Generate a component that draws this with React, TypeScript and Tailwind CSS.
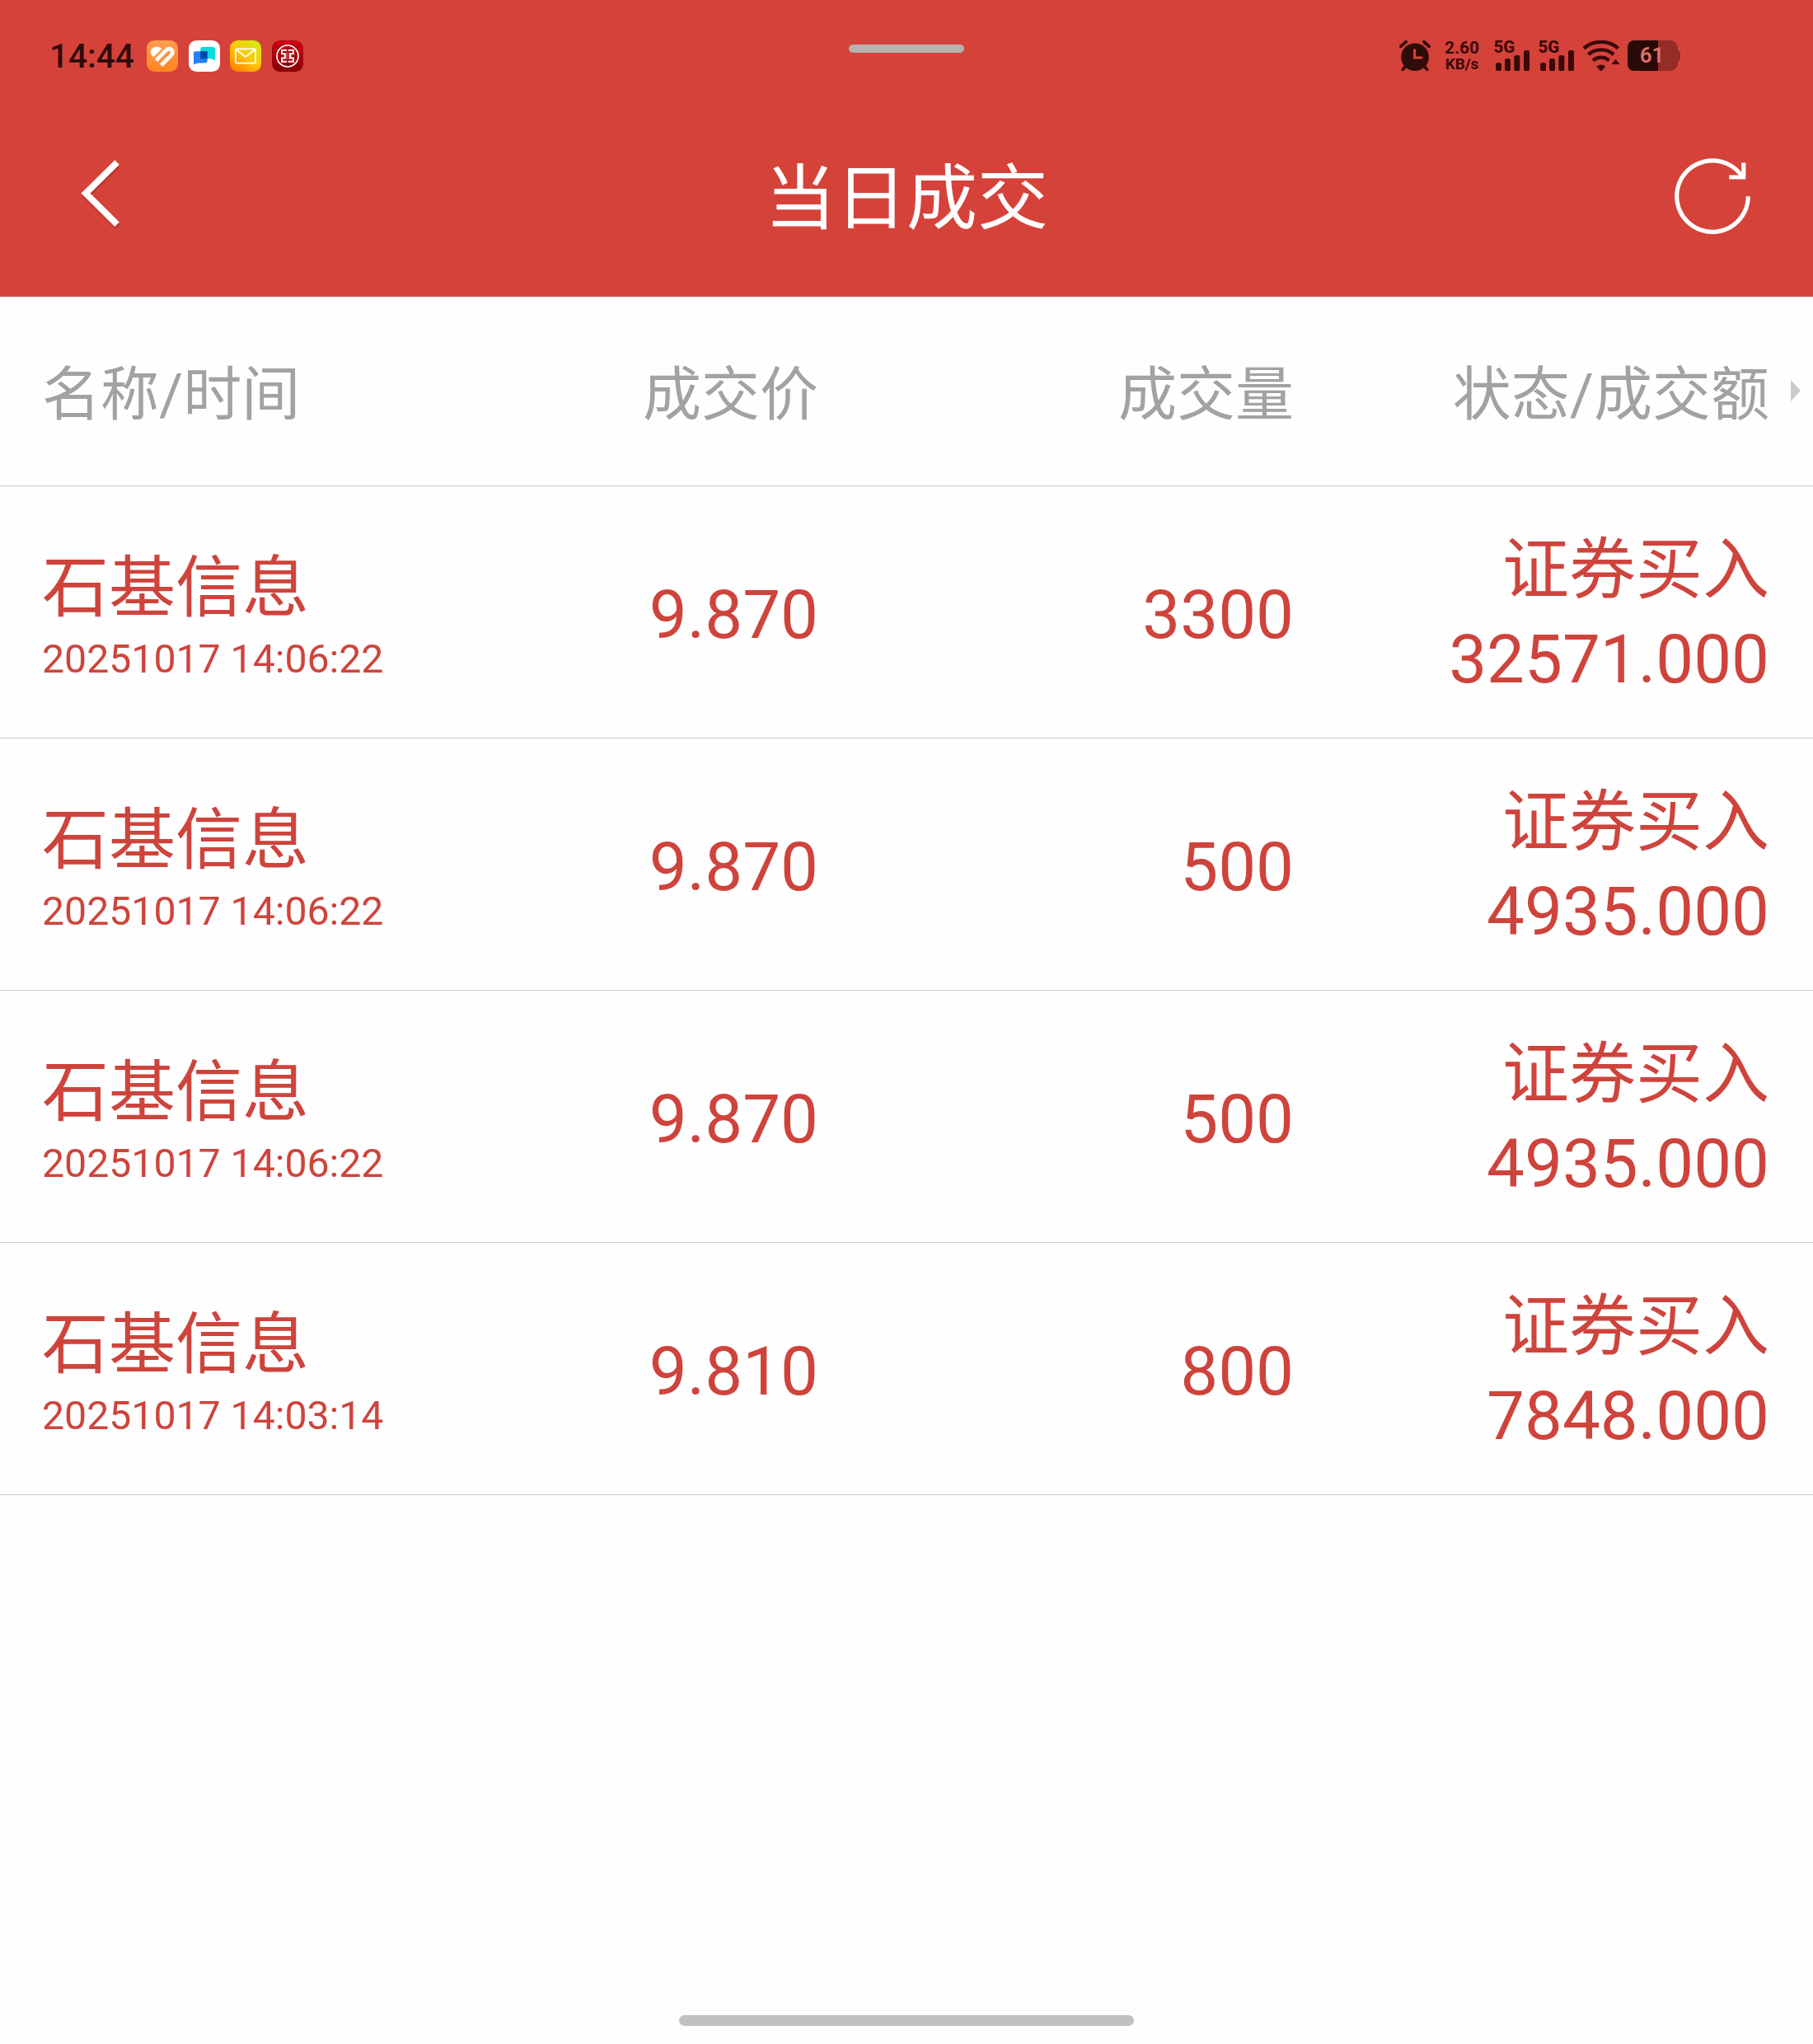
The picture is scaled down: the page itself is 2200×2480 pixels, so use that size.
import React from "react";

type Trade = {
  name: string;
  time: string;
  price: string;
  volume: string;
  side: string;
  amount: string;
};

const trades: Trade[] = [
  { name: "石基信息", time: "20251017 14:06:22", price: "9.870", volume: "3300", side: "证券买入", amount: "32571.000" },
  { name: "石基信息", time: "20251017 14:06:22", price: "9.870", volume: "500", side: "证券买入", amount: "4935.000" },
  { name: "石基信息", time: "20251017 14:06:22", price: "9.870", volume: "500", side: "证券买入", amount: "4935.000" },
  { name: "石基信息", time: "20251017 14:03:14", price: "9.810", volume: "800", side: "证券买入", amount: "7848.000" },
];

const HealthIcon = () => (
  <svg width="38" height="38" viewBox="0 0 38 38">
    <defs>
      <linearGradient id="health" x1="0" y1="0" x2="0" y2="1">
        <stop offset="0" stopColor="#ff9d52" />
        <stop offset="1" stopColor="#ff8420" />
      </linearGradient>
    </defs>
    <rect width="38" height="38" rx="9.5" fill="url(#health)" />
    <path d="M8 20.6Q4.6 17 4.8 13.6Q5.2 9.6 9.2 8.2Q14 7 18.4 10.2Z" fill="#fff" />
    <path
      d="M11.4 24.2 23.2 12.4Q27.4 8.4 30.2 11.6Q32.8 14.8 29.6 18.2L17.6 30.2"
      fill="none"
      stroke="#fff"
      strokeWidth="4.8"
    />
  </svg>
);

const ChatIcon = () => (
  <svg width="38" height="38" viewBox="0 0 38 38">
    <rect width="38" height="38" rx="9.5" fill="#fff" />
    <path d="M16.5 8H29.5Q32 8 32 10.5V24.5Q29 22.3 26 22.3H14.3V10.2Q14.3 8 16.5 8Z" fill="#08dcdc" />
    <path d="M8.4 13.2H22.6V25Q22.6 27.4 20.2 27.4H12Q9 27.4 6 29.6V15.6Q6 13.2 8.4 13.2Z" fill="#2680fb" />
    <path d="M14.3 13.2H22.6V22.3H14.3Z" fill="#0046a8" />
  </svg>
);

const MailIcon = () => (
  <svg width="38" height="38" viewBox="0 0 38 38">
    <defs>
      <linearGradient id="mail" x1="0.1" y1="1" x2="0.85" y2="0">
        <stop offset="0" stopColor="#ff7a00" />
        <stop offset="0.5" stopColor="#ffc60a" />
        <stop offset="1" stopColor="#d2ee12" />
      </linearGradient>
    </defs>
    <rect width="38" height="38" rx="9.5" fill="url(#mail)" />
    <g fill="none" stroke="#fff" strokeWidth="1.8" strokeLinejoin="round">
      <rect x="7" y="10.3" width="24" height="17.4" rx="1.4" />
      <path d="M7.5 11 17.6 19Q19 20 20.4 19L30.5 11" />
    </g>
  </svg>
);

const BankIcon = () => (
  <svg width="38" height="38" viewBox="0 0 38 38">
    <defs>
      <linearGradient id="bank" x1="0" y1="0" x2="0" y2="1">
        <stop offset="0" stopColor="#cb0013" />
        <stop offset="1" stopColor="#8b0005" />
      </linearGradient>
    </defs>
    <rect width="38" height="38" rx="9.5" fill="url(#bank)" />
    <g fill="none" stroke="#fff">
      <circle cx="19" cy="19" r="13" strokeWidth="1.7" />
      <path
        d="M18.2 12H12V16.2H15.8V21.4H12V25.8H18.2M19.8 12H26V16.2H22.2V21.4H26V25.8H19.8"
        strokeWidth="2"
      />
      <path d="M18 14.6V23.2M20 14.6V23.2" strokeWidth="0.8" opacity="0.6" />
    </g>
  </svg>
);

const AlarmIcon = () => (
  <svg width="38" height="38" viewBox="0 0 38 38" fill="none">
    <circle cx="19" cy="20.2" r="16.8" fill="#2f0b0a" />
    <path d="M1.8 7.4 8.2 1.7M36.2 7.4 29.8 1.7" stroke="#2f0b0a" strokeWidth="3.6" strokeLinecap="round" />
    <path d="M8 31 4.2 35.4M30 31 33.8 35.4" stroke="#2f0b0a" strokeWidth="3.6" strokeLinecap="round" />
    <path d="M18.6 11.8V21H27" stroke="#d6423a" strokeWidth="3.2" strokeLinecap="round" />
  </svg>
);

const SignalIcon = () => (
  <svg width="44" height="38" viewBox="0 0 44 38" fill="#3a0907" className="overflow-visible">
    <text x="-0.5" y="14.7" fontSize="20.4" fontWeight="800" className="font-[Roboto]">
      5G
    </text>
    <rect x="2" y="27" width="7" height="10" rx="2.6" />
    <rect x="13" y="22" width="7" height="15" rx="2.6" />
    <rect x="24.3" y="18" width="7" height="19" rx="2.6" />
    <rect x="36" y="12" width="7" height="25" rx="2.6" />
  </svg>
);

const WifiIcon = () => (
  <svg width="46" height="38" viewBox="0 0 46 38" fill="none">
    <g stroke="#3a0907" strokeWidth="4.4">
      <path d="M2 9.6Q11 1.9 22.8 1.9Q34.6 1.9 43.6 9.6" />
      <path d="M7.4 17.2Q14 11.4 22.8 11.4Q31.6 11.4 38.2 17.2" />
      <path d="M13 24.4Q17.4 20.6 22.8 20.6Q28.2 20.6 32.6 24.4" />
    </g>
    <path d="M17.4 31.4Q22.8 27.4 28.2 31.4L24 36.4Q22.8 37.6 21.6 36.4Z" fill="#3a0907" />
    <path d="M40.4 22.8 45.4 29H35.4Z" fill="#3a0907" />
  </svg>
);

const BatteryIcon = () => (
  <svg width="64" height="38" viewBox="0 0 64 38">
    <rect width="61" height="37" rx="9" fill="#942c28" />
    <path d="M61 12.3Q64 13 64 16V21.5Q64 24.5 61 25.2Z" fill="#942c28" />
    <path d="M9 0H37V37H9Q0 37 0 28V9Q0 0 9 0Z" fill="#2a0a09" />
    <text x="29.6" y="27.2" fontSize="26" fontWeight="600" textAnchor="middle" fill="#dc6f69" className="font-[Roboto]">
      61
    </text>
  </svg>
);

const StatusBar = () => (
  <div className="h-[136px] grid grid-cols-[1fr_140px_1fr] items-center">
    <div className="flex items-center pl-[60px]">
      <span className="w-[118px] pb-px text-[40.5px] leading-[40px] font-medium text-[#2f0b0a]">14:44</span>
      <div className="flex gap-[12.7px]">
        <HealthIcon />
        <ChatIcon />
        <MailIcon />
        <BankIcon />
      </div>
    </div>
    <div className="self-start mt-[54px] h-[10px] rounded-full bg-[#b7b2b1]" />
    <div className="flex items-center justify-end pr-[161px]">
      <AlarmIcon />
      <div className="ml-[16px] w-[44px] text-center font-bold text-[#3a0907]">
        <div className="text-[20.8px] leading-[20px]">2.60</div>
        <div className="pt-px text-[18.8px] leading-[19px]">KB/s</div>
      </div>
      <div className="ml-[17px] flex gap-[10px]">
        <SignalIcon />
        <SignalIcon />
      </div>
      <div className="ml-[9px] flex gap-[9px]">
        <WifiIcon />
        <BatteryIcon />
      </div>
    </div>
  </div>
);

const TitleBar = () => (
  <div className="h-[224px] pb-[13px] px-[72px] flex items-center justify-between text-white">
    <svg width="100" height="100" viewBox="0 0 100 100" fill="none">
      <path d="M70.5 7.5 32.5 45 70.5 82.5" transform="translate(0 1)" stroke="#a52e28" strokeWidth="7.5" opacity="0.5" />
      <path d="M70 5 32 42.6 70 80.2" stroke="#fff" strokeWidth="7.8" />
    </svg>
    <h1 className="text-[86px] leading-[90px]">当日成交</h1>
    <svg width="100" height="100" viewBox="0 0 100 100" fill="none" stroke="#fff" strokeWidth="5.2">
      <path d="M93.3 46.2A43.3 43.3 0 1 1 86.3 22.5" />
      <path d="M70.3 23H87.8V5.5" />
    </svg>
  </div>
);

const columns = "grid grid-cols-[942px_577px_577px] pl-[51px]";

const App: React.FC = () => {
  return (
    <div
      lang="zh-CN"
      className="w-[2200px] h-[2480px] overflow-hidden flex flex-col bg-[#fefefe] font-[Roboto,'Noto_Sans_CJK_SC',sans-serif]"
    >
      <header className="bg-[#d5423a]">
        <StatusBar />
        <TitleBar />
      </header>

      {/* Column headings */}
      <div className="relative h-[230px] border-b border-[#cbcbcb] text-[#a2a2a2] text-[71px] leading-[80px]">
        <div className={`${columns} pt-[79px] text-right`}>
          <div className="flex justify-between">
            <span>名称/时间</span>
            <span>成交价</span>
          </div>
          <span>成交量</span>
          <span>状态/成交额</span>
        </div>
        <svg className="absolute right-[15px] top-[101px]" width="12" height="26" viewBox="0 0 12 26" fill="#cbcbcb">
          <path d="M0 0 12 13 0 26Z" />
        </svg>
      </div>

      {/* Trades */}
      <div className="flex-1 text-[#ce443c] text-[81.7px] leading-[80px]">
        {trades.map((trade, i) => (
          <div key={i} className={`${columns} h-[306px] border-b border-[#cbcbcb] text-right`}>
            <div className="flex justify-between">
              <div className="pt-[84px] text-left">
                <div className="text-[81px]">{trade.name}</div>
                <div className="mt-[14px] text-[48.2px] leading-[64px]">{trade.time}</div>
              </div>
              <div className="pt-[116px]">{trade.price}</div>
            </div>
            <div className="pt-[116px]">{trade.volume}</div>
            <div className="pt-[62px]">
              <div className="text-[81px]">{trade.side}</div>
              <div className="mt-[28px]">{trade.amount}</div>
            </div>
          </div>
        ))}
      </div>

      <div className="mx-auto mb-[22px] h-[13px] w-[552px] rounded-full bg-[#c1c1c1]" />
    </div>
  );
};

export default App;
